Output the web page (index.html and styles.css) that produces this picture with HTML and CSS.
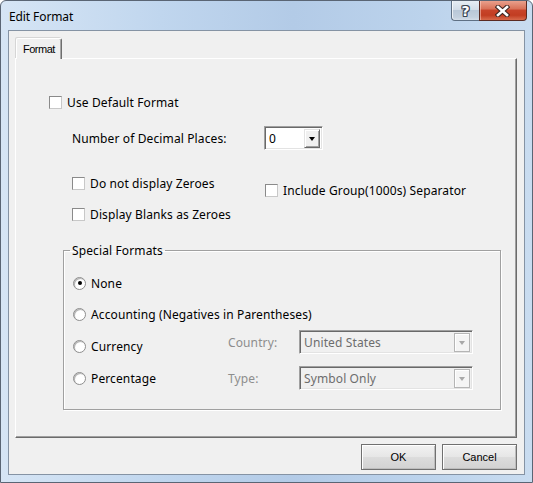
FILE: index.html
```html
<!DOCTYPE html>
<html>
<head>
<meta charset="utf-8">
<link rel="stylesheet" href="styles.css">
</head>
<body>
<div class="window">
  <div class="titlebar">
    <span class="title">Edit Format</span>
    <div class="caption">
      <div class="cbtn help"><span>?</span></div>
      <div class="cbtn close">
        <svg width="15" height="12" viewBox="0 0 15 12">
          <path d="M3 2 L12 10 M12 2 L3 10" stroke="#3b2622" stroke-width="4.6" stroke-linecap="square" fill="none"/>
          <path d="M3 2 L12 10 M12 2 L3 10" stroke="#ffffff" stroke-width="2.6" stroke-linecap="square" fill="none"/>
        </svg>
      </div>
    </div>
  </div>
  <div class="client">
    <div class="tabs"><div class="tab">Format</div></div>
    <div class="panel">
      <div class="row r1"><span class="cb"></span><span class="txt">Use Default Format</span></div>
      <div class="row r2">
        <span class="lbl">Number of Decimal Places:</span>
        <div class="combo small">
          <span class="val">0</span>
          <span class="drop"><span class="tri"></span></span>
        </div>
      </div>
      <div class="cols">
        <div class="col-left">
          <div class="row chk"><span class="cb"></span><span class="txt">Do not display Zeroes</span></div>
          <div class="row chk second"><span class="cb"></span><span class="txt">Display Blanks as Zeroes</span></div>
        </div>
        <div class="col-right">
          <div class="row chk"><span class="cb"></span><span class="txt">Include Group(1000s) Separator</span></div>
        </div>
      </div>
      <fieldset class="group">
        <legend>Special Formats</legend>
        <div class="row radio-row first"><span class="rb on"></span><span class="txt">None</span></div>
        <div class="row radio-row"><span class="rb"></span><span class="txt">Accounting (Negatives in Parentheses)</span></div>
        <div class="row opt-row currency">
          <div class="radio-cell"><span class="rb"></span><span class="txt">Currency</span></div>
          <span class="dlbl">Country:</span>
          <div class="combo wide disabled">
            <span class="val">United States</span>
            <span class="drop"><span class="tri"></span></span>
          </div>
        </div>
        <div class="row opt-row percent">
          <div class="radio-cell"><span class="rb"></span><span class="txt">Percentage</span></div>
          <span class="dlbl">Type:</span>
          <div class="combo wide disabled">
            <span class="val">Symbol Only</span>
            <span class="drop"><span class="tri"></span></span>
          </div>
        </div>
      </fieldset>
    </div>
    <div class="buttons">
      <button class="btn">OK</button>
      <button class="btn">Cancel</button>
    </div>
  </div>
</div>
</body>
</html>
```
FILE: styles.css
```css
* { box-sizing: border-box; }
html, body { margin: 0; padding: 0; background: #ffffff; }
body {
  font-family: "Noto Sans", "Open Sans", sans-serif;
  font-size: 12px;
  letter-spacing: 0.12px;
  color: #000;
}
.window {
  width: 533px;
  height: 483px;
  border: 1px solid #5a6574;
  border-radius: 6px 6px 0 0;
  background: linear-gradient(to right, #d6e5f5 0%, #c0d6ee 30%, #b3cbe7 55%, #bcd3ec 80%, #c9dcf0 100%);
  padding: 0 7px 7px;
  display: flex;
  flex-direction: column;
}
.titlebar {
  height: 29px;
  margin: 0 -7px;
  padding-left: 8px;
  display: flex;
  align-items: flex-start;
}
.title {
  margin-top: 7px;
  line-height: 17px;
  font-size: 12px;
  letter-spacing: -0.1px;
}
.caption {
  margin-left: auto;
  margin-right: 5px;
  display: flex;
  height: 20px;
}
.cbtn {
  height: 20px;
  display: flex;
  align-items: center;
  justify-content: center;
}
.help {
  width: 28px;
  border: 1px solid #5f7084;
  border-top: none;
  border-right: none;
  border-radius: 0 0 0 4px;
  background: linear-gradient(#e6edf4 0%, #d3dde8 45%, #b9c8d8 50%, #c3d0de 85%, #d4dee9 100%);
  box-shadow: inset 1px 0 0 rgba(255,255,255,0.7);
}
.help span {
  font-family: "DejaVu Sans", sans-serif;
  font-weight: bold;
  font-size: 14px;
  line-height: 14px;
  color: #fff;
  text-shadow: 1px 0 0 #3b4654, -1px 0 0 #3b4654, 0 1px 0 #3b4654, 0 -1px 0 #3b4654, 1px 1px 0 #3b4654, -1px -1px 0 #3b4654, 1px -1px 0 #3b4654, -1px 1px 0 #3b4654;
}
.close {
  width: 48px;
  border: 1px solid #5a2a22;
  border-top: none;
  border-radius: 0 0 4px 0;
  background: linear-gradient(#e9a08c 0%, #d9735a 40%, #c7432a 50%, #c23d22 75%, #d76a4c 100%);
  box-shadow: inset 1px 0 0 rgba(255,220,210,0.5);
}
.close svg { display: block; margin-left: -1px; }

.client {
  flex: 1;
  border: 1px solid #8593a4;
  background: #f0f0f0;
  padding: 7px 0 0 6px;
  display: flex;
  flex-direction: column;
}
.tabs {
  display: flex;
  padding-left: 1px;
  height: 20px;
}
.tab {
  position: relative;
  z-index: 1;
  width: 46px;
  height: 21px;
  background: #f0f0f0;
  border-top: 1px solid #ffffff;
  border-left: 1px solid #ffffff;
  border-right: 1px solid #6e6e6e;
  border-radius: 2px 2px 0 0;
  box-shadow: -1px -1px 0 #d6d6d6, inset -1px 0 0 #a8a8a8;
  font-family: "Liberation Sans", Arial, sans-serif;
  font-size: 11px;
  letter-spacing: -0.5px;
  line-height: 17px;
  padding-left: 6px;
  padding-top: 2px;
}
.panel {
  width: 502px;
  height: 380px;
  border-top: 1px solid #ffffff;
  border-left: 1px solid #ffffff;
  border-right: 1px solid #6b6b6b;
  border-bottom: 1px solid #6b6b6b;
  box-shadow: inset -1px -1px 0 #a0a0a0;
  padding: 36px 0 0 33px;
}
.row {
  display: flex;
  align-items: center;
}
.txt { white-space: nowrap; }
.r1 { height: 15px; }
.cb {
  width: 13px;
  height: 13px;
  flex: none;
  background: #fff;
  border-top: 1px solid #8a8a8a;
  border-left: 1px solid #8a8a8a;
  border-right: 1px solid #c8c8c8;
  border-bottom: 1px solid #c8c8c8;
  margin-right: 5px;
}
.r2 {
  height: 24px;
  margin-top: 16px;
  margin-left: 23px;
}
.lbl { width: 192px; }
.combo {
  height: 24px;
  background: #fff;
  border-top: 1px solid #a0a0a0;
  border-left: 1px solid #a0a0a0;
  border-right: 1px solid #ffffff;
  border-bottom: 1px solid #ffffff;
  box-shadow: inset 1px 1px 0 #696969, inset -1px -1px 0 #e3e3e3;
  display: flex;
  align-items: center;
  padding: 2px 2px 2px 4px;
}
.combo .val { flex: 1; white-space: nowrap; }
.combo.small { width: 59px; }
.combo.small .val { color: #000; }
.drop {
  width: 16px;
  height: 19px;
  flex: none;
  background: #f0f0f0;
  border-top: 1px solid #e3e3e3;
  border-left: 1px solid #e3e3e3;
  border-right: 1px solid #696969;
  border-bottom: 1px solid #696969;
  box-shadow: inset 1px 1px 0 #fff, inset -1px -1px 0 #a0a0a0;
  display: flex;
  align-items: center;
  justify-content: center;
}
.tri {
  width: 0;
  height: 0;
  border-left: 3.5px solid transparent;
  border-right: 3.5px solid transparent;
  border-top: 4px solid #000;
  margin-top: 1px;
}
.combo.wide { width: 174px; }
.combo.disabled { background: #f0f0f0; }
.combo.disabled .val { color: #6d6d6d; }
.combo.disabled .drop {
  border: 1px solid #b5b5b5;
  box-shadow: inset 1px 1px 0 #fff;
  background: #f4f4f4;
}
.combo.disabled .tri { border-top-color: #a8a8a8; }

.cols {
  display: flex;
  margin-top: 25px;
  margin-left: 23px;
}
.col-left { width: 193px; }
.chk { height: 16px; }
.chk.second { margin-top: 15px; }
.col-right { padding-top: 7px; }

.group {
  margin: 21px 0 0 14px;
  width: 438px;
  height: 167px;
  padding: 0 0 0 9px;
  border: 1px solid #a0a0a0;
  box-shadow: 1px 1px 0 #fff, inset 1px 1px 0 #fff;
  min-width: 0;
}
.group legend {
  padding: 0 2px;
  margin-left: -3px;
  line-height: 15px;
}
.radio-row { height: 16px; margin-top: 15px; }
.radio-row.first { margin-top: 17px; }
.rb {
  width: 13px;
  height: 13px;
  flex: none;
  border-radius: 50%;
  background: radial-gradient(circle at 60% 60%, #ffffff 45%, #e6e6e6 100%);
  border: 1px solid #8e8e8e;
  box-shadow: inset 1px 1px 0 #b4b4b4;
  margin-right: 5px;
  display: flex;
  align-items: center;
  justify-content: center;
}
.rb.on::after {
  content: "";
  width: 4px;
  height: 4px;
  border-radius: 50%;
  background: #000;
}
.opt-row { height: 24px; }
.opt-row.currency { margin-top: 8px; }
.opt-row.percent { margin-top: 12px; }
.radio-cell {
  width: 155px;
  display: flex;
  align-items: center;
}
.currency .radio-cell { margin-top: 8px; }
.dlbl { width: 71px; color: #8d8d8d; }

.buttons {
  display: flex;
  justify-content: flex-end;
  gap: 6px;
  margin-top: 6px;
  padding-right: 7px;
}
.btn {
  width: 75px;
  height: 26px;
  margin: 0;
  padding: 0;
  font-family: "Liberation Sans", Arial, sans-serif;
  font-size: 11px;
  letter-spacing: 0;
  color: #000;
  background: linear-gradient(#f2f2f2, #e6e6e6 50%, #dcdcdc 51%, #d2d2d2);
  border: 1px solid #707070;
  border-radius: 0;
  box-shadow: inset 1px 1px 0 #fff, inset -1px -1px 0 #bdbdbd;
}
```
